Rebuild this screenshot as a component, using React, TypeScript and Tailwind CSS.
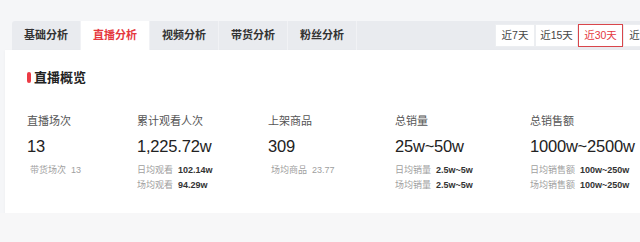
import React from 'react';

const tabs = ['基础分析', '直播分析', '视频分析', '带货分析', '粉丝分析'];
const ranges = [
  { label: '近7天', w: 'w-[40px]' },
  { label: '近15天', w: 'w-[43px]' },
  { label: '近30天', w: 'w-[45px]' },
  { label: '近90天', w: 'w-[45px]' },
];

const stats = [
  { w: 'w-[110px]', label: '直播场次', value: '13', subs: [{ k: '带货场次', v: '13', muted: true }] },
  {
    w: 'w-[131px]', label: '累计观看人次', value: '1,225.72w',
    subs: [{ k: '日均观看', v: '102.14w' }, { k: '场均观看', v: '94.29w' }],
  },
  { w: 'w-[127px]', label: '上架商品', value: '309', subs: [{ k: '场均商品', v: '23.77', muted: true }] },
  {
    w: 'w-[135px]', label: '总销量', value: '25w~50w',
    subs: [{ k: '日均销量', v: '2.5w~5w' }, { k: '场均销量', v: '2.5w~5w' }],
  },
  {
    w: 'w-[140px]', label: '总销售额', value: '1000w~2500w',
    subs: [{ k: '日均销售额', v: '100w~250w' }, { k: '场均销售额', v: '100w~250w' }],
  },
];

export default function App() {
  const active = '直播分析';
  const activeRange = '近30天';

  return (
    <div
      className="w-[640px] h-[242px] overflow-hidden bg-[#f5f6f8] text-[#333]"
      style={{ fontFamily: '"Liberation Sans", "Noto Sans CJK SC", sans-serif' }}
    >
      <div className="h-[21px]" />

      {/* tab bar */}
      <div className="ml-[12px] h-[29px] flex items-center bg-[#e9ebef] rounded-tl-[3px]">
        <div className="flex h-full">
          {tabs.map(t => (
            <div
              key={t}
              className={`h-full w-[69px] flex items-center justify-center text-[11px] font-semibold border-r border-[#f1f2f5] ${
                t === active ? 'bg-white text-[#e5383e]' : 'text-[#333]'
              }`}
            >
              {t}
            </div>
          ))}
        </div>
        <div className="flex-1" />
        <div className="flex shrink-0 h-[23px] mr-[-28px] bg-white">
          {ranges.map(r => (
            <div
              key={r.label}
              className={`${r.w} h-full flex items-center justify-center text-[10.5px] border ${
                r.label === activeRange
                  ? 'border-[#d9464b] text-[#e5383e]'
                  : 'border-[#eceef1] text-[#444]'
              }`}
            >
              {r.label}
            </div>
          ))}
        </div>
      </div>

      {/* card */}
      <div className="ml-[5px] h-[163px] bg-white shadow-[0_1px_3px_rgba(0,0,0,0.04)]">
        <div className="pt-[21px] pl-[22px] flex items-center gap-[3px]">
          <span className="w-[4px] h-[11px] rounded-full bg-[#ec3b45]" />
          <span className="text-[13px] font-bold text-[#222] leading-none">直播概览</span>
        </div>

        <div className="flex pl-[22px] mt-[30px]">
          {stats.map(s => (
            <div key={s.label} className={`${s.w} shrink-0`}>
              <div className="text-[11px] leading-[14px] text-[#555]">{s.label}</div>
              <div className="mt-[9px] text-[16.5px] leading-[18px] text-[#222] tracking-[-0.2px]">{s.value}</div>
              <div className="mt-[10px] flex flex-col gap-[5px]">
                {s.subs.map(sub => (
                  <div key={sub.k} className={`text-[9px] leading-[10px] flex gap-[5px] ${s.subs.length === 1 ? 'pl-[3px]' : ''}`}>
                    <span className="text-[#a0a0a0]">{sub.k}</span>
                    <span className={sub.muted ? 'text-[#a0a0a0]' : 'text-[#333] font-semibold'}>{sub.v}</span>
                  </div>
                ))}
              </div>
            </div>
          ))}
        </div>
      </div>

      <div className="h-[29px] bg-[#f7f7f8]" />
    </div>
  );
}
